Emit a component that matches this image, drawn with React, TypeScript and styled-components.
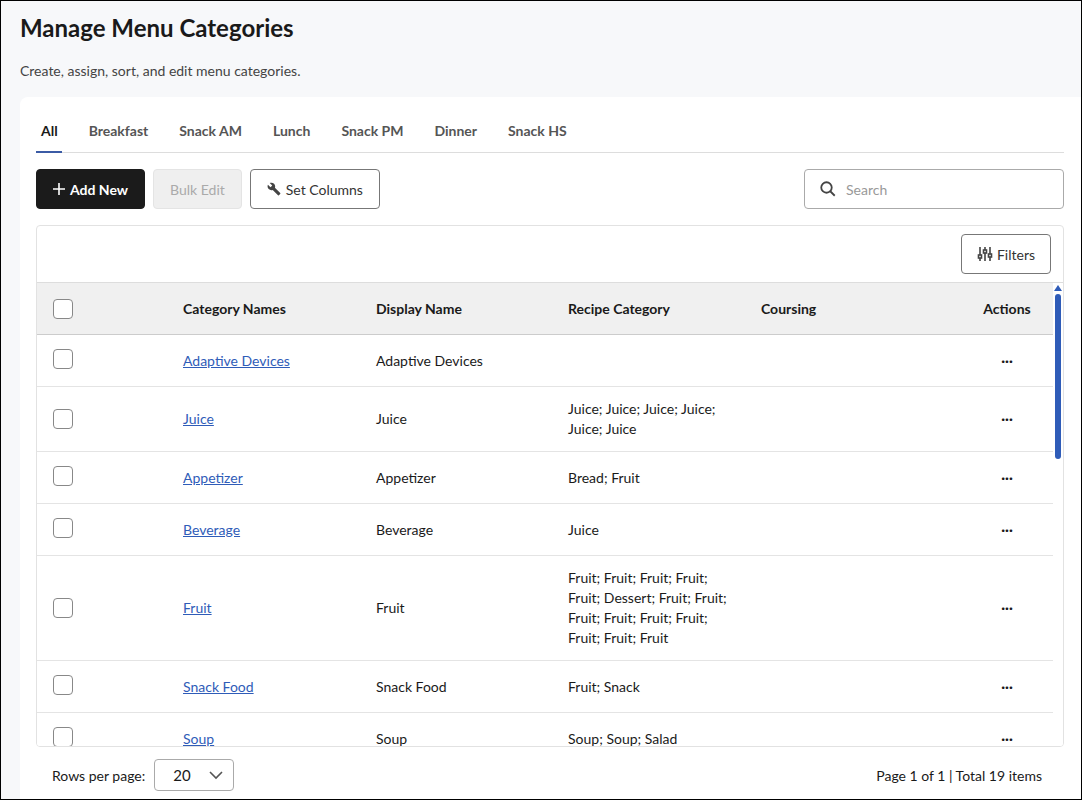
import React from "react";
import styled, { createGlobalStyle } from "styled-components";

const Global = createGlobalStyle`
  html, body { margin: 0; padding: 0; }
  body { font-family: Lato, "Open Sans", sans-serif; color: #1a1a1a; }
  * { box-sizing: border-box; }
`;

const Page = styled.div`
  width: 1082px; height: 800px; border: 1px solid #000; background: #f7f8fa;
  padding: 12px 0 0 19px; overflow: hidden; display: flex; flex-direction: column;
`;
const Title = styled.h1`margin: 0; font-size: 24px; font-weight: 700; line-height: 30px; color: #1a1a1a;`;
const Sub = styled.p`margin: 19px 0 0; font-size: 14px; color: #444; line-height: 18px;`;
const Card = styled.div`
  margin-top: 17px; background: #fff; border-radius: 8px 0 0 0; flex: 1;
  padding: 18px 17px 0 16px; display: flex; flex-direction: column;
`;
const Tabs = styled.div`display: flex; gap: 0; border-bottom: 1px solid #ddd; height: 38px;`;
const Tab = styled.div<{ $active?: boolean }>`
  padding: 7px 0 0; margin-right: 31px; font-size: 14px; font-weight: 700; height: 38px;
  color: ${p => p.$active ? "#1a1a1a" : "#555"};
  border-bottom: 2px solid ${p => p.$active ? "#3b5ba5" : "transparent"};
  margin-left: ${p => p.$active ? "0" : "0"};
  ${p => p.$active && "padding-left:5px;padding-right:4px;margin-right:27px;"}
`;
const Toolbar = styled.div`display: flex; align-items: center; gap: 8px; margin-top: 16px;`;
const Btn = styled.button<{ $variant: "dark" | "disabled" | "outline" }>`
  height: 40px; border-radius: 4px; font-family: inherit; font-size: 14px; display: flex; align-items: center; gap: 5px;
  padding: 0 16px;
  ${p => p.$variant === "dark" && "background:#1b1b1b;color:#fff;border:1px solid #1b1b1b;font-weight:700;"}
  ${p => p.$variant === "disabled" && "background:#efefef;color:#aaa;border:1px solid #e4e4e4;"}
  ${p => p.$variant === "outline" && "background:#fff;color:#333;border:1px solid #777;"}
`;
const Search = styled.div`
  margin-left: auto; width: 260px; height: 40px; border: 1px solid #aaa; border-radius: 4px;
  display: flex; align-items: center; gap: 9px; padding-left: 14px; color: #999; font-size: 14px;
`;
const TableBox = styled.div`
  margin-top: 16px; border: 1px solid #e2e2e2; border-radius: 4px; height: 522px; display: flex; flex-direction: column; overflow: hidden;
`;
const FilterBar = styled.div`display: flex; justify-content: flex-end; padding: 8px 12px 8px 0; height: 57px; border-bottom: 1px solid #ddd;`;
const Body = styled.div`flex: 1; display: flex; overflow: hidden;`;
const Rows = styled.div`flex: 1; overflow: hidden;`;
const Row = styled.div<{ $h: number; $head?: boolean }>`
  display: grid; grid-template-columns: 146px 193px 192px 193px 160px 1fr; align-items: center;
  height: ${p => p.$h}px; border-bottom: 1px solid ${p => p.$head ? "#ccc" : "#e4e4e4"};
  background: ${p => p.$head ? "#f0f0f0" : "#fff"}; font-size: 14px; line-height: 20px;
  font-weight: ${p => p.$head ? 700 : 400};
`;
const Check = styled.div`width: 20px; height: 20px; border: 1px solid #888; border-radius: 4px; margin-left: 16px; background: #fff; align-self: center;`;
const Link = styled.a`color: #2f5cb8; text-decoration: underline;`;
const Act = styled.div<{ $head?: boolean }>`text-align: center; padding-left: 40px; ${p => !p.$head && "font-weight:700;letter-spacing:0;"}`;
const Scroll = styled.div`width: 10px; background: #fff; display: flex; flex-direction: column; align-items: center; padding-top: 2px;`;
const Thumb = styled.div`width: 6px; height: 165px; background: #2f5cb8; border-radius: 3px; margin-top: 3px;`;
const Footer = styled.div`display: flex; align-items: center; justify-content: space-between; height: 56px; padding: 0 22px 0 16px; font-size: 14px;`;
const Select = styled.div`
  width: 80px; height: 32px; border: 1px solid #aaa; border-radius: 4px; margin-left: 9px;
  display: flex; align-items: center; justify-content: space-between; padding: 0 10px 0 18px; font-size: 15px;
`;

const rows: [string, string, string[], number][] = [
  ["Adaptive Devices", "Adaptive Devices", [], 52],
  ["Juice", "Juice", ["Juice; Juice; Juice; Juice;", "Juice; Juice"], 65],
  ["Appetizer", "Appetizer", ["Bread; Fruit"], 52],
  ["Beverage", "Beverage", ["Juice"], 52],
  ["Fruit", "Fruit", ["Fruit; Fruit; Fruit; Fruit;", "Fruit; Dessert; Fruit; Fruit;", "Fruit; Fruit; Fruit; Fruit;", "Fruit; Fruit; Fruit"], 105],
  ["Snack Food", "Snack Food", ["Fruit; Snack"], 52],
  ["Soup", "Soup", ["Soup; Soup; Salad"], 52],
];

export default function App() {
  return (
    <Page>
      <Global />
      <Title>Manage Menu Categories</Title>
      <Sub>Create, assign, sort, and edit menu categories.</Sub>
      <Card>
        <Tabs>
          {["All", "Breakfast", "Snack AM", "Lunch", "Snack PM", "Dinner", "Snack HS"].map((t, i) => (
            <Tab key={t} $active={i === 0}>{t}</Tab>
          ))}
        </Tabs>
        <Toolbar>
          <Btn $variant="dark">
            <svg width="12" height="12" viewBox="0 0 12 12"><path d="M6 0v12M0 6h12" stroke="#fff" strokeWidth="1.6" /></svg>
            Add New
          </Btn>
          <Btn $variant="disabled">Bulk Edit</Btn>
          <Btn $variant="outline">
            <svg width="14" height="14" viewBox="0 0 24 24" fill="#444"><path d="M22.7 19l-9.1-9.1c.9-2.3.4-5-1.5-6.9-2-2-5-2.4-7.4-1.3L9 6 6 9 1.6 4.7C.4 7.1.9 10.1 2.9 12.1c1.9 1.9 4.6 2.4 6.9 1.5l9.1 9.1c.4.4 1 .4 1.4 0l2.3-2.3c.5-.4.5-1.1.1-1.4z" /></svg>
            Set Columns
          </Btn>
          <Search>
            <svg width="18" height="18" viewBox="0 0 24 24" fill="none" stroke="#444" strokeWidth="2.4"><circle cx="10" cy="10" r="7" /><path d="M15 15l6 6" /></svg>
            Search
          </Search>
        </Toolbar>
        <TableBox>
          <FilterBar>
            <Btn $variant="outline" style={{ padding: "0 15px", gap: 4 }}>
              <svg width="16" height="16" viewBox="0 0 16 16" stroke="#444" strokeWidth="1.6" fill="#fff"><path d="M3 1v14M8 1v14M13 1v14" /><rect x="1.5" y="9" width="3" height="3" /><rect x="6.5" y="4" width="3" height="3" /><rect x="11.5" y="8" width="3" height="3" /></svg>
              Filters
            </Btn>
          </FilterBar>
          <Body>
            <Rows>
              <Row $h={52} $head>
                <Check /><div>Category Names</div><div>Display Name</div><div>Recipe Category</div><div>Coursing</div><Act $head>Actions</Act>
              </Row>
              {rows.map(([n, d, r, h]) => (
                <Row key={n} $h={h}>
                  <Check style={{ alignSelf: "start", marginTop: h > 60 ? (h - 22) / 2 : 14 }} />
                  <div><Link>{n}</Link></div>
                  <div>{d}</div>
                  <div>{r.map(l => <div key={l}>{l}</div>)}</div>
                  <div />
                  <Act>···</Act>
                </Row>
              ))}
            </Rows>
            <Scroll>
              <svg width="8" height="6" viewBox="0 0 8 6"><path d="M0 6L4 0L8 6z" fill="#2f5cb8" /></svg>
              <Thumb />
            </Scroll>
          </Body>
        </TableBox>
        <Footer>
          <div style={{ display: "flex", alignItems: "center" }}>
            Rows per page:
            <Select>20
              <svg width="14" height="9" viewBox="0 0 14 9" fill="none" stroke="#555" strokeWidth="1.6"><path d="M1 1l6 6 6-6" /></svg>
            </Select>
          </div>
          <div>Page 1 of 1 | Total 19 items</div>
        </Footer>
      </Card>
    </Page>
  );
}
